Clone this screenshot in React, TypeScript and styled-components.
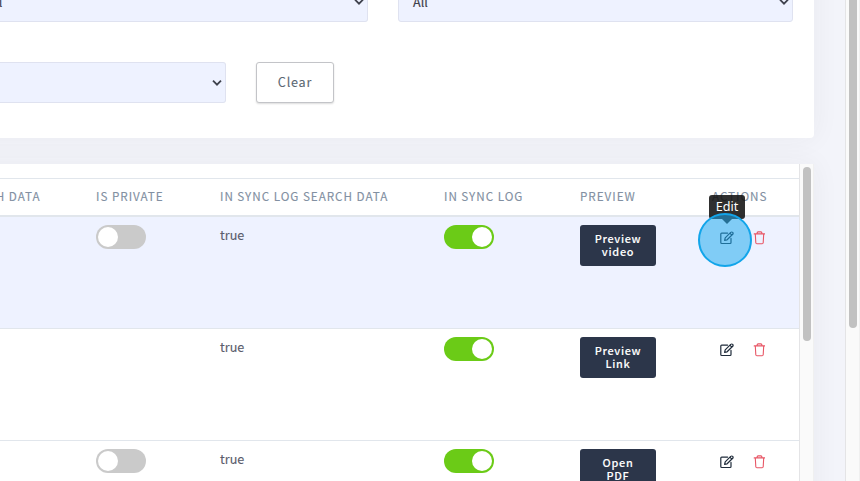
import React from "react";
import styled, { createGlobalStyle } from "styled-components";

const Global = createGlobalStyle`
  * { box-sizing: border-box; }
  html, body { margin: 0; height: 100%; overflow: hidden; }
  body { font-family: "Noto Sans CJK SC", "Noto Sans", sans-serif; background: #f3f4fa; color: #5a5d6c; }
`;

const Page = styled.div`
  display: flex;
  width: 860px;
  height: 481px;
  overflow: hidden;
`;

const Content = styled.main`
  flex: 1;
  display: flex;
  flex-direction: column;
  gap: 26px;
  overflow: hidden;
`;

const Card = styled.section`
  flex: none;
  display: flex;
  width: 854px;
  margin-left: -40px;
  padding-left: 40px;
  background: #fff;
  border-radius: 4px;
  box-shadow: 0 0 28px rgba(50, 50, 60, 0.055);
`;

const Filters = styled(Card)`
  height: 178px;
  margin-top: -40px;
  padding-top: 40px;
  flex-direction: column;
  gap: 40px;
`;

const FilterRow = styled.div`
  display: flex;
  gap: 30px;
`;

const SelectBox = styled.div<{ $width: number; $clipped?: boolean }>`
  display: flex;
  justify-content: space-between;
  align-items: center;
  width: ${(p) => p.$width}px;
  height: 41px;
  margin-top: ${(p) => (p.$clipped ? -19 : 0)}px;
  padding: 0 3px 0 14px;
  background: #eef2ff;
  border: 1px solid #dfe2f0;
  border-radius: 3px;
  color: #3e414c;
  font-size: 12.6px;
  line-height: 20px;
  -webkit-text-stroke: 0.15px currentColor;
`;

const EdgeSelect = styled(SelectBox)`
  padding-left: 0;
  border-left: 0;
  border-radius: 0 3px 3px 0;
`;

const EdgeValue = styled.span`
  margin-left: -12.5px;
`;

const ClearButton = styled.button`
  width: 78px;
  height: 41px;
  padding: 0 0 2px;
  background: #fff;
  border: 1px solid #c3c4c8;
  border-radius: 3px;
  box-shadow: 0 1px 2px rgba(0, 0, 0, 0.14);
  color: #5b6873;
  font: 400 12.6px "Noto Sans CJK SC", sans-serif;
  letter-spacing: 0.8px;
  -webkit-text-stroke: 0.1px currentColor;
`;

const TableCard = styled(Card)`
  height: 400px;
`;

const Table = styled.div`
  width: 799px;
  padding-top: 14px;
`;

const Row = styled.div<{ $active?: boolean }>`
  display: grid;
  grid-template-columns: 96px 124px 224px 136px 132px 87px;
  height: 112px;
  padding-top: 8px;
  align-items: start;
  background: ${(p) => (p.$active ? "#eef2ff" : "#fff")};
  border-bottom: 1px solid #e1e6ec;
`;

const HeadRow = styled(Row)`
  height: 39px;
  border-top: 1px solid #e1e6ec;
  border-bottom: 2px solid #e1e6ec;
`;

const HeadCell = styled.div`
  color: #8290a2;
  font-size: 11.7px;
  line-height: 18px;
  letter-spacing: 0.96px;
  white-space: nowrap;
  -webkit-text-stroke: 0.12px currentColor;
`;

const CutHeadCell = styled(HeadCell)`
  display: flex;
  justify-content: flex-end;
  width: 40.5px;
`;

const Value = styled.div`
  font-size: 12.6px;
  line-height: 20px;
  -webkit-text-stroke: 0.12px currentColor;
`;

const Track = styled.div<{ $on?: boolean }>`
  display: flex;
  justify-content: ${(p) => (p.$on ? "flex-end" : "flex-start")};
  width: 50px;
  height: 24px;
  padding: 2px;
  border-radius: 12px;
  background: ${(p) => (p.$on ? "#6bcb17" : "#cacaca")};
`;

const Knob = styled.span`
  width: 20px;
  height: 20px;
  border-radius: 50%;
  background: #fff;
`;

const PreviewButton = styled.button`
  width: 76px;
  height: 41px;
  padding: 0 12px 2px;
  border: 0;
  border-radius: 3px;
  background: #2c364a;
  color: #fff;
  font: 500 10.9px/12.5px "Noto Sans CJK SC", sans-serif;
  letter-spacing: 0.7px;
  -webkit-text-stroke: 0.1px currentColor;
`;

const Actions = styled.div`
  display: flex;
  gap: 19px;
  padding: 6px 0 0 8px;
`;

const EditAnchor = styled.span`
  position: relative;
  display: flex;
`;

const Tooltip = styled.div`
  position: absolute;
  left: -11px;
  top: -36px;
  width: 36px;
  height: 24px;
  border-radius: 3px;
  background: rgba(18, 18, 18, 0.88);
  color: #fff;
  font: 400 12.6px/23px "Noto Sans", sans-serif;
  text-align: center;
  &::after {
    content: "";
    position: absolute;
    left: 13px;
    top: 24px;
    border: 5px solid transparent;
    border-top-color: rgba(18, 18, 18, 0.88);
    border-bottom: 0;
  }
`;

const ClickHalo = styled.span`
  position: absolute;
  left: -22.5px;
  top: -18px;
  width: 54px;
  height: 54px;
  border: 2px solid #12a5ea;
  border-radius: 50%;
  background: rgba(30, 170, 238, 0.53);
`;

const ScrollTrack = styled.div`
  display: flex;
  flex: none;
  justify-content: center;
  width: 15px;
  background: #fafafa;
  border-left: 1px solid #e4e4e6;
  border-right: 1px solid #f0f0f0;
`;

const ScrollThumb = styled.span<{ $top: number; $height: number }>`
  width: 8px;
  height: ${(p) => p.$height}px;
  margin-top: ${(p) => p.$top}px;
  border-radius: 4px;
  background: #c1c1c1;
`;

const Chevron = () => (
  <svg width="10" height="6" viewBox="0 0 10 6" fill="none" stroke="#3e414c" strokeWidth="1.8">
    <path d="M1 .7 5 4.7 9 .7" />
  </svg>
);

const EditIcon = () => (
  <svg width="14" height="14" viewBox="0 0 14 14" fill="none" stroke="#1f2b3a" strokeWidth="1.2" strokeLinejoin="round" strokeLinecap="round">
    <path d="M7.6 2.1H1.7Q.8 2.1.8 3v8.6q0 .9.9.9h8.4q.9 0 .9-.9V7.4" />
    <path d="M4.6 9.3 5.2 6.9 10.7 1.4Q11.7.6 12.7 1.4 13.5 2.4 12.7 3.3L7.1 8.8ZM9.9 2.2l1.9 1.9" />
  </svg>
);

const TrashIcon = () => (
  <svg width="12" height="14" viewBox="0 0 12 14" fill="none" stroke="#e85665" strokeWidth="1.1" strokeLinejoin="round" strokeLinecap="round">
    <path d="M1.2 2.9H11.8M4.1 2.8V1.9Q4.1.9 5.1.9h2.8q1 0 1 1v.9M2.3 3l.5 8.8q.1 1 1.1 1h5.2q1 0 1.1-1l.5-8.8" />
  </svg>
);

interface Entry {
  label: string;
  toggle: boolean;
  active?: boolean;
}

const entries: Entry[] = [
  { label: "Preview video", toggle: true, active: true },
  { label: "Preview Link", toggle: false },
  { label: "Open PDF", toggle: true },
];

const Toggle = ({ on }: { on?: boolean }) => (
  <Track $on={on}>
    <Knob />
  </Track>
);

export default function App() {
  return (
    <Page>
      <Global />
      <Content>
        <Filters>
          <FilterRow>
            <EdgeSelect $width={368} $clipped>
              <EdgeValue>All</EdgeValue>
              <Chevron />
            </EdgeSelect>
            <SelectBox $width={395} $clipped>
              <span>All</span>
              <Chevron />
            </SelectBox>
          </FilterRow>
          <FilterRow>
            <EdgeSelect $width={226}>
              <span />
              <Chevron />
            </EdgeSelect>
            <ClearButton>Clear</ClearButton>
          </FilterRow>
        </Filters>
        <TableCard>
          <Table>
            <HeadRow>
              <CutHeadCell>SEARCH DATA</CutHeadCell>
              <HeadCell>IS PRIVATE</HeadCell>
              <HeadCell>IN SYNC LOG SEARCH DATA</HeadCell>
              <HeadCell>IN SYNC LOG</HeadCell>
              <HeadCell>PREVIEW</HeadCell>
              <HeadCell>ACTIONS</HeadCell>
            </HeadRow>
            {entries.map((e) => (
              <Row key={e.label} $active={e.active}>
                <span />
                <div>{e.toggle && <Toggle />}</div>
                <Value>true</Value>
                <Toggle on />
                <PreviewButton>{e.label}</PreviewButton>
                <Actions>
                  <EditAnchor>
                    <EditIcon />
                    {e.active && (
                      <>
                        <Tooltip>Edit</Tooltip>
                        <ClickHalo />
                      </>
                    )}
                  </EditAnchor>
                  <TrashIcon />
                </Actions>
              </Row>
            ))}
          </Table>
          <ScrollTrack>
            <ScrollThumb $top={3} $height={174} />
          </ScrollTrack>
        </TableCard>
      </Content>
      <ScrollTrack>
        <ScrollThumb $top={-10} $height={338} />
      </ScrollTrack>
    </Page>
  );
}
